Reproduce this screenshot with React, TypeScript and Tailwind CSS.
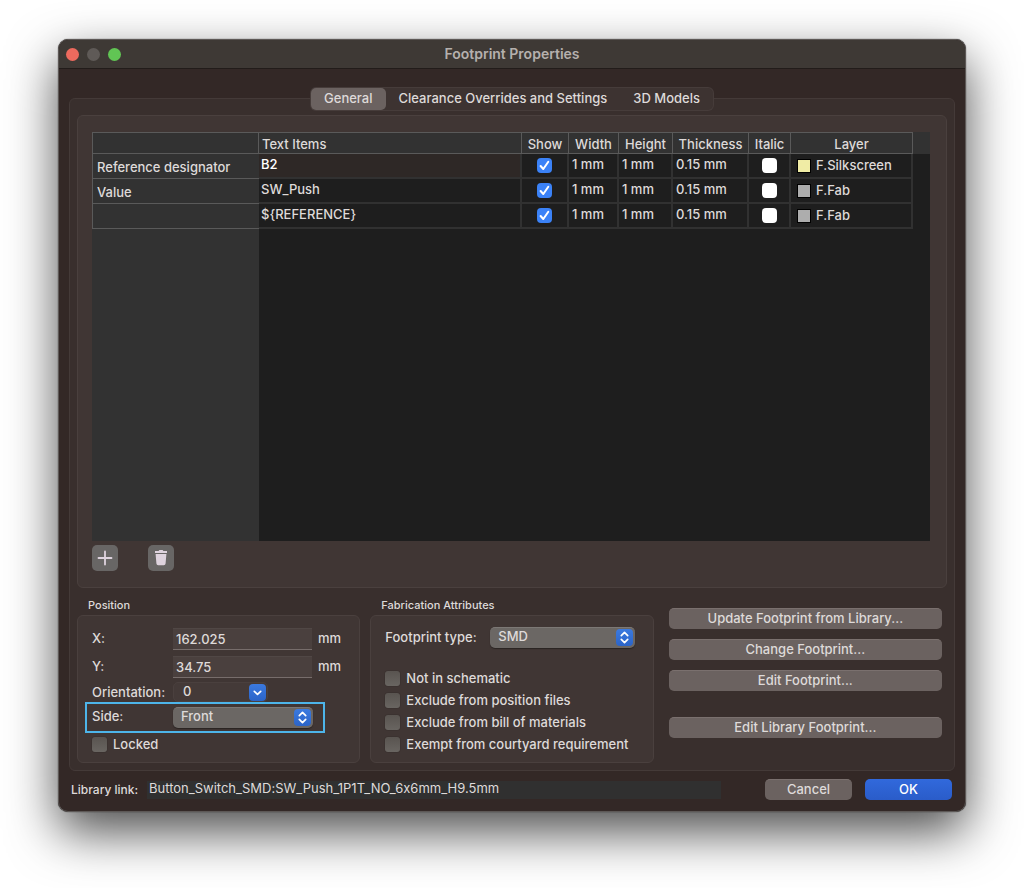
import React, { useState } from "react";
import clsx from "clsx";

const tabs = ["General", "Clearance Overrides and Settings", "3D Models"];

const initialItems = [
  { label: "Reference designator", text: "B2", show: true, italic: false, layer: "F.Silkscreen", silk: true },
  { label: "Value", text: "SW_Push", show: true, italic: false, layer: "F.Fab", silk: false },
  { label: "", text: "${REFERENCE}", show: true, italic: false, layer: "F.Fab", silk: false },
];

const attributes = [
  "Not in schematic",
  "Exclude from position files",
  "Exclude from bill of materials",
  "Exempt from courtyard requirement",
];

const headCell = "border-t border-r border-b border-[#5a5a5a] p-0 pt-[2px] text-center leading-[18px] font-medium";
const cell = "border-r-2 border-b-2 border-[#313131] p-0 pl-[3px] pb-px";

function Tick() {
  return (
    <svg viewBox="0 0 15 15" className="pointer-events-none absolute inset-0 size-[15px] opacity-0 peer-checked:opacity-100">
      <path d="M3.6 8 6.3 11 11.3 3.8" fill="none" stroke="white" strokeWidth="2" strokeLinecap="round" strokeLinejoin="round" />
    </svg>
  );
}

function GridCheck({ label, checked, onChange }: { label: string; checked: boolean; onChange: () => void }) {
  return (
    <span className="relative mx-auto block size-[15px]">
      <input
        type="checkbox"
        aria-label={label}
        checked={checked}
        onChange={onChange}
        className="peer block size-[15px] appearance-none rounded bg-white checked:bg-[#3b82f7]"
      />
      <Tick />
    </span>
  );
}

function CheckRow({ label }: { label: string }) {
  return (
    <label className="flex h-[22px] items-center gap-[6px]">
      <span className="relative block size-[15px]">
        <input
          type="checkbox"
          className="peer block size-[15px] appearance-none rounded-[3px] bg-linear-to-b from-[#595450] to-[#696561] shadow-[0_0_1px_#1c1817] checked:bg-[#3b82f7]"
        />
        <Tick />
      </span>
      <span className="pt-px">{label}</span>
    </label>
  );
}

function PopUp({ id, options, className }: { id: string; options: string[]; className: string }) {
  return (
    <div className={clsx("relative h-[21px]", className)}>
      <select
        id={id}
        className="block h-[21px] w-full appearance-none rounded-[5px] border-t border-[#7c7875] bg-[#6b6764] pb-[3px] pl-2 leading-[17px] shadow-[0_1px_1px_#2a2422]"
      >
        {options.map((option) => (
          <option key={option}>{option}</option>
        ))}
      </select>
      <span className="pointer-events-none absolute top-[2px] right-[2px] flex size-[17px] items-center justify-center rounded bg-linear-to-b from-[#3b7ae0] to-[#2b64c8]">
        <svg viewBox="0 0 17 17" className="size-[17px]" fill="none" stroke="white" strokeWidth="1.7" strokeLinecap="round" strokeLinejoin="round">
          <path d="M5.3 6.6 8.5 3.4 11.7 6.6M5.3 10.4 8.5 13.6 11.7 10.4" />
        </svg>
      </span>
    </div>
  );
}

function CoordinateRow({ id, label, value }: { id: string; label: string; value: string }) {
  return (
    <div className="flex h-[22px] items-center">
      <label htmlFor={id} className="w-[81px] shrink-0">{label}</label>
      <input
        id={id}
        defaultValue={value}
        className="h-[22px] w-[139px] border-t border-b border-t-[#504745] border-b-[#776d6b] bg-[#4a403e] px-[3px] outline-none"
      />
      <span className="ml-[6px]">mm</span>
    </div>
  );
}

function PushButton({ children, className }: { children: React.ReactNode; className?: string }) {
  return (
    <button type="button" className={clsx("h-[21px] rounded-[5px] border-t border-[#7a706e] bg-[#6b6260] pb-[2px] leading-[18px]", className)}>
      {children}
    </button>
  );
}

export default function App() {
  const [activeTab, setActiveTab] = useState("General");
  const [items, setItems] = useState(initialItems);

  const toggle = (index: number, field: "show" | "italic") => {
    setItems(items.map((item, i) => (i === index ? { ...item, [field]: !item[field] } : item)));
  };

  return (
    <main className="min-h-screen bg-white px-[58px] pt-[39px] pb-[77px] font-['Inter',sans-serif] text-[13px] font-medium text-[#dedad9] [font-feature-settings:'calt'_0]">
      <div className="overflow-hidden rounded-[10px] border border-[#5d5856] bg-[#332826] shadow-[0_0_1px_#000,0_20px_50px_rgba(0,0,0,0.7)]">
        <header className="grid h-[29px] grid-cols-[1fr_auto_1fr] items-center border-b border-[#221c1a] bg-[#3e3935]">
          <div className="flex gap-2 pl-[7px]">
            <button type="button" aria-label="Close" className="size-[13px] rounded-full bg-[#ed6a5e]" />
            <button type="button" aria-label="Minimize" className="size-[13px] rounded-full bg-[#5f5a57]" />
            <button type="button" aria-label="Zoom" className="size-[13px] rounded-full bg-[#61c554]" />
          </div>
          <h1 className="text-[14px] leading-5 font-semibold text-[#b5b0ad]">Footprint Properties</h1>
        </header>

        <div className="px-[10px] pt-[19px]">
          <div role="tablist" className="relative mx-auto -mb-3 flex h-[22px] w-fit rounded-[5px] bg-[#3d3331] shadow-[0_0_0_1px_#463c3a]">
            {tabs.map((tab) => (
              <button
                key={tab}
                type="button"
                role="tab"
                aria-selected={tab === activeTab}
                onClick={() => setActiveTab(tab)}
                className={clsx("rounded-[5px] px-[13px] pb-[2px] leading-[20px]", tab === activeTab && "bg-[#6b6260]")}
              >
                {tab}
              </button>
            ))}
          </div>

          <div className="rounded-md border border-[#443a38] bg-[#392f2d] px-[7px] pt-4 pb-[7px]">
            <section className="rounded-md border border-[#4a403e] bg-[#403634] py-4 pr-4 pl-[14px]">
              <table className="h-[409px] w-full table-fixed border-separate border-spacing-0 bg-[#1e1e1e] text-left">
                <colgroup>
                  <col className="w-[167px]" />
                  <col />
                  <col className="w-[47px]" />
                  <col className="w-[50px]" />
                  <col className="w-[54px]" />
                  <col className="w-[76px]" />
                  <col className="w-[42px]" />
                  <col className="w-[122px]" />
                  <col className="w-[17px]" />
                </colgroup>
                <thead className="h-[22px] bg-[#323232]">
                  <tr className="h-[22px]">
                    <td className="border border-[#5a5a5a] p-0"></td>
                    <th className="border-t border-r border-b border-[#5a5a5a] p-0 pt-[2px] pl-[3px] leading-[18px] font-medium">Text Items</th>
                    <th className={headCell}>Show</th>
                    <th className={headCell}>Width</th>
                    <th className={headCell}>Height</th>
                    <th className={headCell}>Thickness</th>
                    <th className={headCell}>Italic</th>
                    <th className={headCell}>Layer</th>
                    <td className="p-0"></td>
                  </tr>
                </thead>
                <tbody>
                  {items.map((item, index) => (
                    <tr key={index} className="h-[25px]">
                      <th className="border-b border-l border-[#5a5a5a] bg-[#323232] p-0 pt-[3px] pl-1 font-medium">{item.label}</th>
                      <td className={clsx("border-r-2 border-b-2 border-[#313131] p-0 pb-px pl-[2px]", index === 0 && "bg-[#2e2826] text-white")}>
                        {item.text}
                      </td>
                      <td className="border-r-2 border-b-2 border-[#313131] p-0">
                        <GridCheck label={`Show ${item.text}`} checked={item.show} onChange={() => toggle(index, "show")} />
                      </td>
                      <td className={cell}>1 mm</td>
                      <td className={cell}>1 mm</td>
                      <td className={cell}>0.15 mm</td>
                      <td className="border-r-2 border-b-2 border-[#313131] p-0">
                        <GridCheck label={`Italic ${item.text}`} checked={item.italic} onChange={() => toggle(index, "italic")} />
                      </td>
                      <td className="border-r-2 border-b-2 border-[#313131] p-0 pl-[6px]">
                        <div className="flex items-center gap-[5px]">
                          <span className={clsx("size-[14px] border border-black", item.silk ? "bg-[#f0eca5]" : "bg-[#adadad]")} />
                          <span className="pt-px">{item.layer}</span>
                        </div>
                      </td>
                      <td className="p-0"></td>
                    </tr>
                  ))}
                  <tr>
                    <td className="bg-[#323232] p-0"></td>
                    <td colSpan={8} className="p-0"></td>
                  </tr>
                </tbody>
              </table>

              <div className="mt-1 flex gap-[30px]">
                <button type="button" aria-label="Add text item" className="flex size-[26px] items-center justify-center rounded-[5px] bg-[#686665]">
                  <svg viewBox="0 0 26 26" className="size-[26px]" fill="none" stroke="#ded3de" strokeWidth="1.8" strokeLinecap="round">
                    <path d="M13 6.5v13M6.5 13h13" />
                  </svg>
                </button>
                <button type="button" aria-label="Delete text item" className="flex size-[26px] items-center justify-center rounded-[5px] bg-[#686665]">
                  <svg viewBox="0 0 26 26" className="size-[26px]" fill="#ded3de">
                    <path d="M7 6.1h3.6l.8-1h3.2l.8 1H19v1.8H7zM7.6 9h10.8l-.8 9.6a1.8 1.8 0 0 1-1.8 1.6h-5.6a1.8 1.8 0 0 1-1.8-1.6z" />
                  </svg>
                </button>
              </div>
            </section>

            <div className="mt-[9px] grid grid-cols-3 gap-[10px]">
              <section>
                <h2 className="mb-[2px] pl-[11px] text-[11px] leading-4">Position</h2>
                <div className="h-[148px] rounded-md border border-[#4a403e] bg-[#403634] px-[14px] pt-3">
                  <div className="space-y-[6px]">
                    <CoordinateRow id="pos-x" label="X:" value="162.025" />
                    <CoordinateRow id="pos-y" label="Y:" value="34.75" />
                  </div>
                  <div className="mt-1 flex h-5 items-center">
                    <label htmlFor="orientation" className="w-[81px] shrink-0 pt-[2px]">Orientation:</label>
                    <div className="flex h-5 w-[95px] items-center rounded-[5px] border border-[#4a403e] bg-[#443a38] pr-px">
                      <input id="orientation" defaultValue="0" className="w-0 min-w-0 flex-1 bg-transparent pl-[9px] outline-none" />
                      <button type="button" aria-label="Orientation presets" className="size-[17px] rounded bg-linear-to-b from-[#3b7ae0] to-[#2b64c8]">
                        <svg viewBox="0 0 17 17" className="size-[17px]" fill="none" stroke="white" strokeWidth="1.7" strokeLinecap="round" strokeLinejoin="round">
                          <path d="M5.3 7.3 8.5 10.3 11.7 7.3" />
                        </svg>
                      </button>
                    </div>
                  </div>
                  <div className="-mx-[7px] flex h-[31px] w-[240px] items-center border-2 border-[#4db5ea] px-[5px] pb-px">
                    <label htmlFor="side" className="w-[81px] shrink-0">Side:</label>
                    <PopUp id="side" options={["Front", "Back"]} className="w-[140px]" />
                  </div>
                  <CheckRow label="Locked" />
                </div>
              </section>

              <section>
                <h2 className="mb-[2px] pl-[11px] text-[11px] leading-4">Fabrication Attributes</h2>
                <div className="h-[148px] rounded-md border border-[#4a403e] bg-[#403634] pt-[11px] pr-[18px] pl-[14px]">
                  <div className="mb-[19px] flex h-[21px] items-center">
                    <label htmlFor="footprint-type" className="w-[105px] shrink-0 pt-px">Footprint type:</label>
                    <PopUp id="footprint-type" options={["SMD", "Through hole", "Other"]} className="flex-1" />
                  </div>
                  {attributes.map((label) => (
                    <CheckRow key={label} label={label} />
                  ))}
                </div>
              </section>

              <div className="flex flex-col gap-[10px] px-[5px] pt-[11px]">
                <PushButton>Update Footprint from Library...</PushButton>
                <PushButton>Change Footprint...</PushButton>
                <PushButton>Edit Footprint...</PushButton>
                <PushButton className="mt-4">Edit Library Footprint...</PushButton>
              </div>
            </div>
          </div>
        </div>

        <footer className="flex items-center pt-2 pr-[13px] pb-[11px] pl-3">
          <label htmlFor="library-link" className="w-[76px] shrink-0 text-[12px]">Library link:</label>
          <input
            id="library-link"
            readOnly
            value="Button_Switch_SMD:SW_Push_1P1T_NO_6x6mm_H9.5mm"
            className="h-[18px] min-w-0 flex-1 bg-[#303030] px-[2px] pb-[2px] font-normal outline-none"
          />
          <PushButton className="ml-11 w-[87px]">Cancel</PushButton>
          <button type="button" className="ml-[13px] h-[21px] w-[87px] rounded-[5px] bg-linear-to-b from-[#3169dc] to-[#2a5cc9] pb-px leading-[18px] text-white">
            OK
          </button>
        </footer>
      </div>
    </main>
  );
}
